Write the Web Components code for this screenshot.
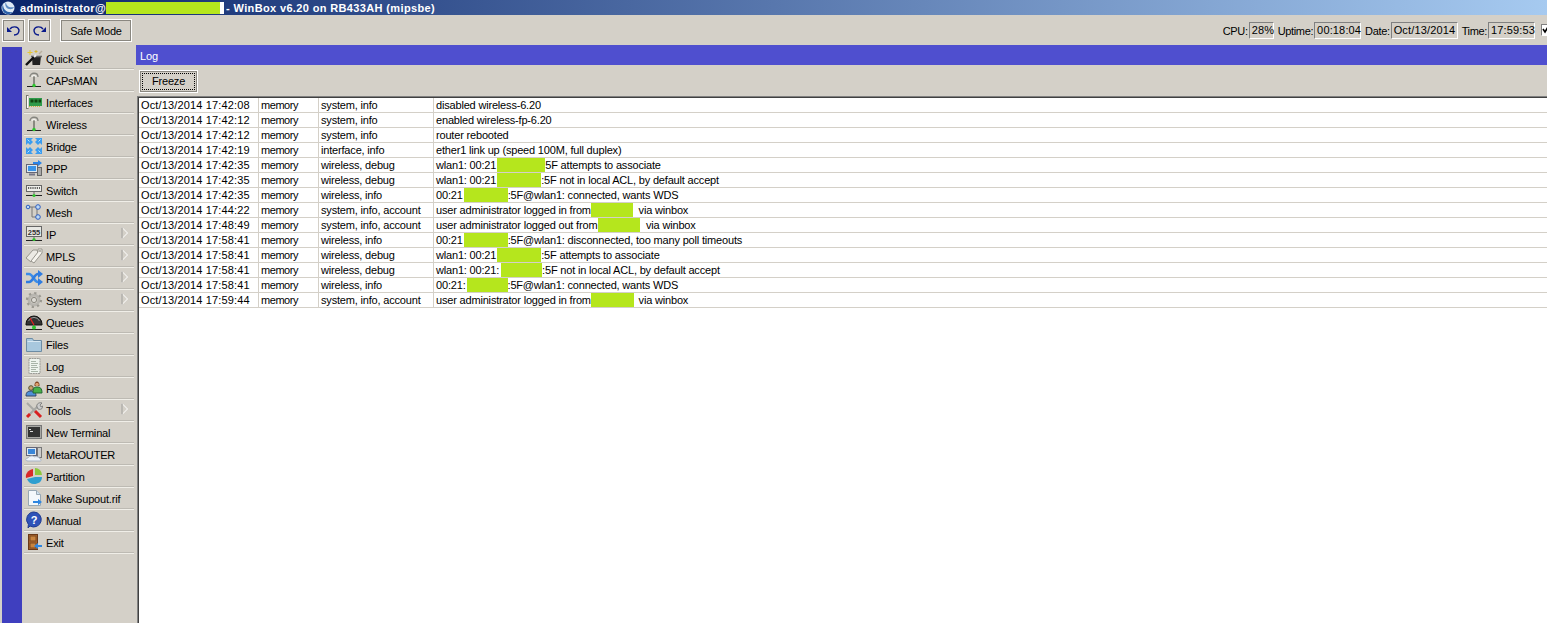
<!DOCTYPE html>
<html>
<head>
<meta charset="utf-8">
<title>WinBox</title>
<style>
    html, body {
        margin: 0;
        height: 623px;
        overflow: hidden;
        background: #d4d0c8;
        font: 11px "Liberation Sans", Arial, sans-serif;
        letter-spacing: -0.18px;
        color: #000;
    }
</style>
</head>
<body>
<win-box>
    <title-bar slot="title"></title-bar>
    <main-toolbar slot="toolbar"></main-toolbar>
    <side-menu slot="menu">
        <menu-item icon="quickset">Quick Set</menu-item>
        <menu-item icon="antenna">CAPsMAN</menu-item>
        <menu-item icon="interfaces">Interfaces</menu-item>
        <menu-item icon="antenna">Wireless</menu-item>
        <menu-item icon="bridge">Bridge</menu-item>
        <menu-item icon="ppp">PPP</menu-item>
        <menu-item icon="switch">Switch</menu-item>
        <menu-item icon="mesh">Mesh</menu-item>
        <menu-item icon="ip" arrow>IP</menu-item>
        <menu-item icon="mpls" arrow>MPLS</menu-item>
        <menu-item icon="routing" arrow>Routing</menu-item>
        <menu-item icon="system" arrow>System</menu-item>
        <menu-item icon="queues">Queues</menu-item>
        <menu-item icon="files">Files</menu-item>
        <menu-item icon="log">Log</menu-item>
        <menu-item icon="radius">Radius</menu-item>
        <menu-item icon="tools" arrow>Tools</menu-item>
        <menu-item icon="terminal">New Terminal</menu-item>
        <menu-item icon="metarouter">MetaROUTER</menu-item>
        <menu-item icon="partition">Partition</menu-item>
        <menu-item icon="supout">Make Supout.rif</menu-item>
        <menu-item icon="manual">Manual</menu-item>
        <menu-item icon="exit">Exit</menu-item>
    </side-menu>
    <log-window slot="content">
        <log-row time="Oct/13/2014 17:42:08" topics="system, info">disabled wireless-6.20</log-row>
        <log-row time="Oct/13/2014 17:42:12" topics="system, info">enabled wireless-fp-6.20</log-row>
        <log-row time="Oct/13/2014 17:42:12" topics="system, info">router rebooted</log-row>
        <log-row time="Oct/13/2014 17:42:19" topics="interface, info">ether1 link up (speed 100M, full duplex)</log-row>
        <log-row time="Oct/13/2014 17:42:35" topics="wireless, debug">wlan1: 00:21<hide-mark w="48" l="1"></hide-mark>5F attempts to associate</log-row>
        <log-row time="Oct/13/2014 17:42:35" topics="wireless, debug">wlan1: 00:21<hide-mark w="44" l="1"></hide-mark>:5F not in local ACL, by default accept</log-row>
        <log-row time="Oct/13/2014 17:42:35" topics="wireless, info">00:21<hide-mark w="44" l="1"></hide-mark>:5F@wlan1: connected, wants WDS</log-row>
        <log-row time="Oct/13/2014 17:44:22" topics="system, info, account">user administrator logged in from <hide-mark w="42" l="-3" r="3"></hide-mark> via winbox</log-row>
        <log-row time="Oct/13/2014 17:48:49" topics="system, info, account">user administrator logged out from <hide-mark w="42" l="-2"></hide-mark>&nbsp; via winbox</log-row>
        <log-row time="Oct/13/2014 17:58:41" topics="wireless, info">00:21<hide-mark w="44" l="1"></hide-mark>:5F@wlan1: disconnected, too many poll timeouts</log-row>
        <log-row time="Oct/13/2014 17:58:41" topics="wireless, debug">wlan1: 00:21<hide-mark w="44" l="1"></hide-mark>:5F attempts to associate</log-row>
        <log-row time="Oct/13/2014 17:58:41" topics="wireless, debug">wlan1: 00:21:<hide-mark w="41" l="2"></hide-mark>:5F not in local ACL, by default accept</log-row>
        <log-row time="Oct/13/2014 17:58:41" topics="wireless, info">00:21:<hide-mark w="41" l="1"></hide-mark>:5F@wlan1: connected, wants WDS</log-row>
        <log-row time="Oct/13/2014 17:59:44" topics="system, info, account">user administrator logged in from <hide-mark w="43" l="-3" r="2"></hide-mark> via winbox</log-row>
    </log-window>
</win-box>

<script>
const ANTENNA = `<path d="M5 6c0-5 8-5 8 0" fill="none" stroke="#85857f" stroke-width="1.3"/><path d="M7 6c0-2 4-2 4 0" fill="none" stroke="#f4f4f0" stroke-width="1.2"/><path d="M9 5.5v8" stroke="#77776f" stroke-width="1.6"/><path d="M2 15.5h14" stroke="#222"/><circle cx="9" cy="14.5" r="1.7" fill="#2fc52f"/>`;

const ICONS = {
    quickset: `<path d="M7 7h9l-1 9H7.5z" fill="#222"/><path d="M6 7.5h11" stroke="#666" stroke-width="1.6"/><path d="M1 16l8-8" stroke="#111" stroke-width="2.4"/><path d="M9 8l2-2" stroke="#eee" stroke-width="2"/><path d="M5 1v5M2.5 3.5h5" stroke="#e8c830"/><path d="M11 1v3M9.5 2.5h3" stroke="#d8b830"/><path d="M14 5l3-3" stroke="#b8b0a0" stroke-width="1.4"/>`,
    antenna: ANTENNA,
    interfaces: `<path d="M1.5 2v14" stroke="#77776f"/><path d="M2.500 3v12" stroke="#fff"/><path d="M1.5 2.5h2M1.5 15.5h2" stroke="#77776f"/><rect x="4" y="5" width="13" height="8" fill="#2f9a4a"/><path d="M5.5 6.5h3v3h-3zM9.5 6.5h3v3h-3zM13.5 6.5h2.500v3h-2.500z" fill="#141"/><path d="M4 13.5h12" stroke="#c8b040" stroke-dasharray="1 1"/>`,
    bridge: `<g fill="#3a9cf0"><path d="M1 1h7L6 3l2 2-3 3-2-2-2 2z"/><path d="M17 1h-7l2 2-2 2 3 3 2-2 2 2z"/><path d="M1 17h7l-2-2 2-2-3-3-2 2-2-2z"/><path d="M17 17h-7l2-2-2-2 3-3 2 2 2-2z"/></g><path d="M2.5 2.5l2 2M15.5 2.5l-2 2M2.5 15.5l2-2M15.5 15.5l-2-2" stroke="#bfe4ff"/>`,
    ppp: `<rect x="1.5" y="5.5" width="11" height="8" fill="#dce8f2" stroke="#667"/><rect x="3" y="7" width="8" height="5" fill="#3a94e8"/><path d="M4 15.5h6" stroke="#778" stroke-width="2"/><rect x="12.5" y="8.5" width="4" height="8" fill="#aaa" stroke="#666"/><path d="M8 3h5V1l4 3-4 3V5H8z" fill="#2a84e8"/>`,
    switch: `<rect x="1.5" y="4.5" width="15" height="6" fill="#eeeeea" stroke="#666"/><path d="M3 7h12" stroke="#333" stroke-width="1.4" stroke-dasharray="1.2 1"/><path d="M9 10.5v3" stroke="#666"/><path d="M1 14.5h16" stroke="#222"/><circle cx="9" cy="14.5" r="1.6" fill="#2fc52f"/>`,
    mesh: `<path d="M4 4h8M7 4v10h5M12 4v10" fill="none" stroke="#777"/><g fill="#bcd8f4" stroke="#2f5fc0"><circle cx="3" cy="4" r="1.8"/><circle cx="13" cy="4" r="2.3"/><circle cx="13" cy="14" r="2.3"/></g>`,
    ip: `<rect x="1.5" y="1.5" width="15" height="10" fill="#e8e8e4" stroke="#666"/><text x="9" y="9.5" text-anchor="middle" font-family="Liberation Sans" font-weight="bold" font-size="7.5" letter-spacing="0" fill="#333">255</text><path d="M9 11.5v2" stroke="#666"/><path d="M1 15.5h16" stroke="#222"/><circle cx="9" cy="14.5" r="1.6" fill="#2fc52f"/>`,
    mpls: `<path d="M1 11l7-8h4l1 3-7 9z" fill="#eceae4" stroke="#98968e"/><path d="M6 14l7-9 0-3h4v4l-8 10z" fill="#f6f4ee" stroke="#98968e"/><circle cx="15" cy="4" r=".9" fill="#98968e"/>`,
    routing: `<path d="M1 5h3c4 0 5 8 9 8h1" fill="none" stroke="#3a8ce8" stroke-width="2.6"/><path d="M1 13h3c4 0 5-8 9-8h1" fill="none" stroke="#2f7ce0" stroke-width="2.6"/><path d="M13 1l5 4-5 4zM13 9l5 4-5 4z" fill="#2f7ce0"/>`,
    system: `<circle cx="9" cy="9" r="5" fill="none" stroke="#b8b6b0" stroke-width="3"/><circle cx="9" cy="9" r="7" fill="none" stroke="#9a9890" stroke-width="2.2" stroke-dasharray="2.2 3.3"/><circle cx="9" cy="9" r="2.6" fill="#dcdad4" stroke="#8a8880"/>`,
    queues: `<path d="M1 11a8 8 0 0 1 16 0v1H1z" fill="#333" stroke="#111"/><path d="M3.5 8a6 6 0 0 1 11 0" fill="none" stroke="#999"/><path d="M5 5l4 7" stroke="#e82020" stroke-width="1.2"/><path d="M9 12v3" stroke="#555"/><path d="M1 16.5h16" stroke="#222"/><circle cx="9" cy="14.5" r="2" fill="#2fc52f"/>`,
    files: `<path d="M1.5 3.5h6l1 2h8v11h-15z" fill="#a8c8de" stroke="#6d8ca4"/><path d="M2.5 6.5h13" stroke="#d8e8f2"/>`,
    log: `<path d="M4 1.5h11v15H4z" fill="#eef4ee" stroke="#9a9a96" stroke-dasharray="2 .6"/><path d="M6 4.5h5M6 6.5h7M6 8.5h6M6 10.5h7M6 12.5h5M6 14.5h7" stroke="#a8b4a8"/>`,
    radius: `<circle cx="6" cy="9" r="2.3" fill="#caa070" stroke="#553"/><path d="M1 17c0-4 2-5 5-5s5 1 5 5z" fill="#4f8fd8" stroke="#346"/><path d="M8 14c0-5 1-6 4-6s5 1 5 6z" fill="#48b048" stroke="#263"/><path d="M9.5 7c-.5-6 5.500-6 5 0z" fill="#7a3a18"/><circle cx="12" cy="5.500" r="1.800" fill="#dca070"/>`,
    tools: `<path d="M2 2l9 9" stroke="#a8a8a4" stroke-width="2"/><path d="M10 10l6 6" stroke="#d82020" stroke-width="3"/><path d="M4 14l9-9" stroke="#a8a8a4" stroke-width="2.2"/><path d="M2 16l3-3" stroke="#d82020" stroke-width="3"/><path d="M12 6c-1-3 2-5 5-4l-2 2 1 2 2-1c0 3-3 4-5 3z" fill="#ccc" stroke="#666" stroke-width=".7"/>`,
    terminal: `<rect x="1.5" y="2.5" width="15" height="13" fill="#a8a8a4" stroke="#777"/><rect x="3" y="4" width="12" height="10" fill="#333"/><path d="M4 6.5h2M5 8.5h3" stroke="#ddd"/>`,
    metarouter: `<rect x="1.5" y="2.5" width="10" height="8" fill="#dfe9f2" stroke="#667"/><rect x="3" y="4" width="7" height="5" fill="#3a86d8"/><rect x="12.5" y="2.5" width="4" height="10" fill="#ccc" stroke="#777"/><path d="M3 16c-3 0-3-3 0-3 1-2 5-3 6-1 2-1 6 0 6 2 2 1 1 2 0 2z" fill="#eef2f8" stroke="#a8b4c4"/>`,
    partition: `<path d="M8 2v7l-7 2c-1-4 2-8 7-9z" fill="#d82a2a"/><path d="M10 1a7 7 0 0 1 7 7h-7z" fill="#8cc83c"/><path d="M2 12l8-2h7c0 5-4 7-8 7-3 0-6-2-7-5z" fill="#2f9fd0"/>`,
    supout: `<path d="M3.5 1.5h8l4 4v11h-12z" fill="#f4f8fb" stroke="#98a8b4"/><path d="M11.5 1.5v4h4" fill="#cfe0ee" stroke="#98a8b4"/><path d="M8 12h5v-2l4 3-4 3v-2H8z" fill="#2f86e0"/>`,
    manual: `<path d="M9 1a7.5 7.5 0 1 1-4 14l-2 2 .4-3.6A7.5 7.5 0 0 1 9 1z" fill="#2f52b8" stroke="#1f3a90"/><text x="9" y="13" text-anchor="middle" font-family="Liberation Sans" font-weight="bold" font-size="11" letter-spacing="0" fill="#fff">?</text>`,
    exit: `<rect x="3.5" y="1.5" width="9" height="15" fill="#b0662e" stroke="#6a3a18"/><rect x="5" y="3" width="6" height="5" fill="#c8843f" stroke="#7a4a20"/><rect x="5" y="10" width="6" height="5" fill="#c8843f" stroke="#7a4a20"/><path d="M17 12h-4v-2l-4 3 4 3v-2h4z" fill="#2f86e0"/>`
};

class WinBox extends HTMLElement {
    constructor() {
        super();
        this.attachShadow({ mode: 'open' });
        this.shadowRoot.innerHTML = `
            <style>
                :host {
                    display: flex;
                    flex-direction: column;
                    height: 623px;
                }
                .body {
                    flex: 1;
                    display: flex;
                    min-height: 0;
                }
            </style>
            <slot name="title"></slot>
            <slot name="toolbar"></slot>
            <div class="body">
                <slot name="menu"></slot>
                <slot name="content"></slot>
            </div>
        `;
    }
}

class TitleBar extends HTMLElement {
    constructor() {
        super();
        this.attachShadow({ mode: 'open' });
        this.shadowRoot.innerHTML = `
            <style>
                :host {
                    display: flex;
                    align-items: center;
                    height: 15px;
                    background: linear-gradient(90deg, #0a246a, #a6caf0);
                    color: #fff;
                    font-weight: bold;
                    font-size: 11px;
                    letter-spacing: 0.36px;
                    white-space: pre;
                }
                svg { margin: 0 5px 0 1px; flex: none; }
                .hide { width: 114px; height: 12px; background: #b5e61d; border-right: 4px solid #fff; margin-right: 2px; }
            </style>
            <svg width="14" height="14" viewBox="0 0 14 14">
                <circle cx="7" cy="7" r="6.5" fill="#dfeaf6"/>
                <path d="M2 3c0 6 4 9 10 8-3 3-8 3-10-1-1-2-1-5 0-7z" fill="#2a5fa8"/>
                <path d="M5 1c0 4 3 6 8 5-1 3-6 3-8 0-1-2-1-4 0-5z" fill="#5f8cc4"/>
            </svg>
            <span>administrator@</span><span class="hide"></span><span>- WinBox v6.20 on RB433AH (mipsbe)</span>
        `;
    }
}

class ToolButton extends HTMLElement {
    constructor() {
        super();
        this.attachShadow({ mode: 'open' });
        this.shadowRoot.innerHTML = `
            <style>
                :host {
                    display: flex;
                    align-items: center;
                    justify-content: center;
                    box-sizing: border-box;
                    height: 23px;
                    border: 1px solid #fff;
                    box-shadow: inset 0 0 0 1px #8a8780;
                }
                :host([focused]) .in {
                    outline: 1px dotted #000;
                }
                .in {
                    display: flex;
                    align-items: center;
                    justify-content: center;
                    width: calc(100% - 6px);
                    height: calc(100% - 6px);
                }
            </style>
            <div class="in"><slot></slot></div>
        `;
    }
}

class StatusField extends HTMLElement {
    constructor() {
        super();
        this.attachShadow({ mode: 'open' });
        this.shadowRoot.innerHTML = `
            <style>
                :host {
                    display: flex;
                    align-items: center;
                }
                .label { letter-spacing: -0.35px; }
                .value {
                    box-sizing: border-box;
                    height: 17px;
                    line-height: 15px;
                    padding-left: 2px;
                    margin-left: 1px;
                    border: 1px solid;
                    border-color: #808080 #fff #fff #808080;
                    letter-spacing: 0.15px;
                }
            </style>
            <span class="label"><slot></slot></span>
            <span class="value" style="width:${this.getAttribute('w')}px">${this.getAttribute('value')}</span>
        `;
    }
}

class MainToolbar extends HTMLElement {
    constructor() {
        super();
        this.attachShadow({ mode: 'open' });
        this.shadowRoot.innerHTML = `
            <style>
                :host {
                    display: flex;
                    align-items: center;
                    box-sizing: border-box;
                    height: 30px;
                    padding: 1px 0 0 2px;
                }
                tool-button.square { width: 23px; margin-right: 3px; }
                tool-button.safe { width: 72px; margin-left: 6px; }
                .status {
                    margin-left: auto;
                    display: flex;
                    gap: 4px;
                    margin-right: 12px;
                }
                .check {
                    position: absolute;
                    left: 1541px;
                    top: 24px;
                    width: 11px;
                    height: 12px;
                    box-sizing: border-box;
                    background: #fff;
                    border: 1px solid;
                    border-color: #808080 #fff #fff #808080;
                }
                svg { display: block; }
            </style>
            <tool-button class="square">
                <svg width="15" height="13" viewBox="0 0 15 13"><path d="M4 5c2-3 8-3 9 1 0 3-2 5-5 5" fill="none" stroke="#0a1a8a" stroke-width="1.4"/><path d="M1 3v5h5z" fill="#0a1a8a"/></svg>
            </tool-button>
            <tool-button class="square">
                <svg width="15" height="13" viewBox="0 0 15 13"><path d="M11 5c-2-3-8-3-9 1 0 3 2 5 5 5" fill="none" stroke="#0a1a8a" stroke-width="1.4"/><path d="M14 3v5H9z" fill="#0a1a8a"/></svg>
            </tool-button>
            <tool-button class="safe">Safe Mode</tool-button>
            <div class="status">
                <status-field value="28%" w="25">CPU:</status-field>
                <status-field value="00:18:04" w="47">Uptime:</status-field>
                <status-field value="Oct/13/2014" w="67">Date:</status-field>
                <status-field value="17:59:53" w="47">Time:</status-field>
            </div>
            <div class="check"><svg width="7" height="9" viewBox="0 0 7 9"><path d="M1 4l2 3 3-5" fill="none" stroke="#000" stroke-width="1.6"/></svg></div>
        `;
    }
}

class SideMenu extends HTMLElement {
    constructor() {
        super();
        this.attachShadow({ mode: 'open' });
        this.shadowRoot.innerHTML = `
            <style>
                :host {
                    display: flex;
                    flex: none;
                    width: 136px;
                    padding: 2px 0 0 2px;
                    box-sizing: border-box;
                }
                .rail { width: 20px; flex: none; background: #3f3fbf; }
                .items { flex: 1; min-width: 0; }
            </style>
            <div class="rail"></div>
            <div class="items"><slot></slot></div>
        `;
    }
}

class MenuItem extends HTMLElement {
    constructor() {
        super();
        this.attachShadow({ mode: 'open' });
        const arrow = this.hasAttribute('arrow')
            ? `<svg class="arrow" width="7" height="12" viewBox="0 0 7 12"><path d="M1 .5v11L6.5 6z" fill="#d4d0c8" stroke="#fff"/><path d="M1 .5v11" stroke="#8a8780"/></svg>`
            : '';
        this.shadowRoot.innerHTML = `
            <style>
                :host {
                    display: flex;
                    align-items: center;
                    box-sizing: border-box;
                    height: 22px;
                    margin: 0 2px;
                    border-bottom: 1px solid #bdbab3;
                    box-shadow: 0 1px 0 #f0eee8;
                }
                svg.icon { margin: 1px 0 0 1px; flex: none; }
                .label { margin-left: 3px; padding-top: 2px; }
                .arrow { margin-left: auto; margin-right: 6px; margin-top: -1px; }
            </style>
            <svg class="icon" width="18" height="18" viewBox="0 0 18 18">${ICONS[this.getAttribute('icon')] || ''}</svg>
            <span class="label"><slot></slot></span>
            ${arrow}
        `;
    }
}

class LogWindow extends HTMLElement {
    constructor() {
        super();
        this.attachShadow({ mode: 'open' });
        this.shadowRoot.innerHTML = `
            <style>
                :host {
                    flex: 1;
                    display: flex;
                    flex-direction: column;
                    min-width: 0;
                }
                .head {
                    height: 20px;
                    line-height: 22px;
                    background: #4f4fcf;
                    color: #fff;
                    padding-left: 4px;
                }
                .tools {
                    height: 31px;
                    display: flex;
                    align-items: center;
                    padding: 1px 0 0 3px;
                    box-sizing: border-box;
                }
                tool-button { width: 59px; }
                .list {
                    flex: 1;
                    display: flex;
                    margin-left: 1px;
                    border-top: 1px solid #808080;
                    border-left: 1px solid #808080;
                    min-height: 0;
                }
                .inner {
                    flex: 1;
                    min-width: 0;
                    background: #fff;
                    border-top: 1px solid #404040;
                    border-left: 1px solid #404040;
                    overflow: hidden;
                }
            </style>
            <div class="head">Log</div>
            <div class="tools"><tool-button focused>Freeze</tool-button></div>
            <div class="list"><div class="inner"><slot></slot></div></div>
        `;
    }
}

class LogRow extends HTMLElement {
    constructor() {
        super();
        this.attachShadow({ mode: 'open' });
        this.shadowRoot.innerHTML = `
            <style>
                :host {
                    display: grid;
                    grid-template-columns: 120px 60px 115px 1fr;
                    box-sizing: border-box;
                    height: 15px;
                    line-height: 15px;
                    border-bottom: 1px solid #d4d0c8;
                    white-space: pre;
                }
                div {
                    padding-left: 2px;
                    border-right: 1px solid #d4d0c8;
                    overflow: hidden;
                }
                div:last-child { border-right: 0; }
                .time { letter-spacing: 0.15px; }
                .src { letter-spacing: -0.45px; }
            </style>
            <div class="time">${this.getAttribute('time')}</div>
            <div class="src">memory</div>
            <div>${this.getAttribute('topics')}</div>
            <div><slot></slot></div>
        `;
    }
}

class HideMark extends HTMLElement {
    constructor() {
        super();
        this.attachShadow({ mode: 'open' });
        this.shadowRoot.innerHTML = `
            <style>
                :host {
                    display: inline-block;
                    vertical-align: top;
                    height: 15px;
                    background: #b5e61d;
                }
            </style>
        `;
        this.style.width = this.getAttribute('w') + 'px';
        this.style.marginLeft = (this.getAttribute('l') || 0) + 'px';
        this.style.marginRight = (this.getAttribute('r') || 0) + 'px';
    }
}

customElements.define('win-box', WinBox);
customElements.define('title-bar', TitleBar);
customElements.define('tool-button', ToolButton);
customElements.define('status-field', StatusField);
customElements.define('main-toolbar', MainToolbar);
customElements.define('side-menu', SideMenu);
customElements.define('menu-item', MenuItem);
customElements.define('log-window', LogWindow);
customElements.define('log-row', LogRow);
customElements.define('hide-mark', HideMark);
</script>
</body>
</html>
